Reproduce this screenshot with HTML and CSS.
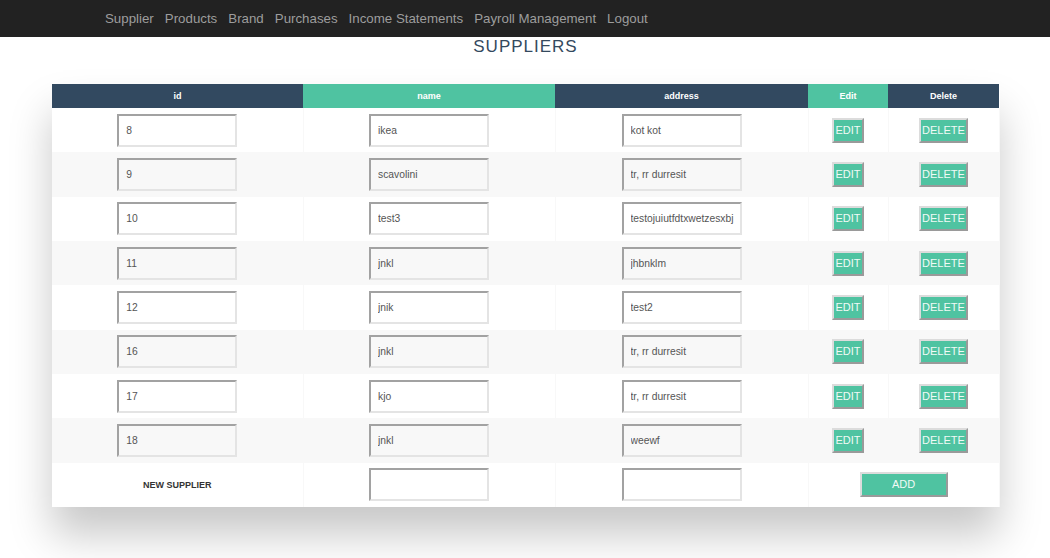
FILE: index.html
```html
<!DOCTYPE html>
<html>
<head>
<meta charset="utf-8">
<title>Suppliers</title>
<link rel="stylesheet" href="styles.css">
</head>
<body>
<nav class="navbar">
  <a href="#">Supplier</a>
  <a href="#">Products</a>
  <a href="#">Brand</a>
  <a href="#">Purchases</a>
  <a href="#">Income Statements</a>
  <a href="#">Payroll Management</a>
  <a href="#">Logout</a>
</nav>
<h2 class="title">Suppliers</h2>
<div class="table-wrapper">
<table class="fl-table">
  <colgroup>
    <col class="c-id"><col class="c-name"><col class="c-addr"><col class="c-edit"><col class="c-del">
  </colgroup>
  <thead>
    <tr><th>id</th><th>name</th><th>address</th><th>Edit</th><th>Delete</th></tr>
  </thead>
  <tbody>
    <tr><td><input class="field" value="8"></td><td><input class="field" value="ikea"></td><td><input class="field" value="kot kot"></td><td><button class="btn">EDIT</button></td><td><button class="btn">DELETE</button></td></tr>
    <tr><td><input class="field" value="9"></td><td><input class="field" value="scavolini"></td><td><input class="field" value="tr, rr durresit"></td><td><button class="btn">EDIT</button></td><td><button class="btn">DELETE</button></td></tr>
    <tr><td><input class="field" value="10"></td><td><input class="field" value="test3"></td><td><input class="field" value="testojuiutfdtxwetzesxbj"></td><td><button class="btn">EDIT</button></td><td><button class="btn">DELETE</button></td></tr>
    <tr><td><input class="field" value="11"></td><td><input class="field" value="jnkl"></td><td><input class="field" value="jhbnklm"></td><td><button class="btn">EDIT</button></td><td><button class="btn">DELETE</button></td></tr>
    <tr><td><input class="field" value="12"></td><td><input class="field" value="jnik"></td><td><input class="field" value="test2"></td><td><button class="btn">EDIT</button></td><td><button class="btn">DELETE</button></td></tr>
    <tr><td><input class="field" value="16"></td><td><input class="field" value="jnkl"></td><td><input class="field" value="tr, rr durresit"></td><td><button class="btn">EDIT</button></td><td><button class="btn">DELETE</button></td></tr>
    <tr><td><input class="field" value="17"></td><td><input class="field" value="kjo"></td><td><input class="field" value="tr, rr durresit"></td><td><button class="btn">EDIT</button></td><td><button class="btn">DELETE</button></td></tr>
    <tr><td><input class="field" value="18"></td><td><input class="field" value="jnkl"></td><td><input class="field" value="weewf"></td><td><button class="btn">EDIT</button></td><td><button class="btn">DELETE</button></td></tr>
    <tr><td class="new-label">NEW SUPPLIER</td><td><input class="field" value=""></td><td><input class="field" value=""></td><td colspan="2"><button class="btn btn-add">ADD</button></td></tr>
  </tbody>
</table>
</div>
</body>
</html>
```

FILE: styles.css
```css
html, body {
  margin: 0;
  padding: 0;
  background: #ffffff;
  font-family: "Liberation Sans", Arial, sans-serif;
}

body {
  min-height: 558px;
}

.navbar {
  height: 37px;
  background: #222222;
  display: flex;
  align-items: center;
  gap: 11px;
  padding-left: 105px;
  box-sizing: border-box;
}

.navbar a {
  color: #9d9d9d;
  font-size: 13.3px;
  text-decoration: none;
  line-height: 16px;
  padding-top: 1px;
}

.title {
  margin: 0 0 27px;
  text-align: center;
  font-size: 17px;
  font-weight: normal;
  line-height: 20px;
  letter-spacing: 1px;
  text-transform: uppercase;
  color: #34495e;
  padding-left: 1px;
}

.table-wrapper {
  width: 947px;
  margin: 0 0 60px 52px;
  box-shadow: 0 28px 40px rgba(0, 0, 0, 0.22);
}

.fl-table {
  width: 947px;
  table-layout: fixed;
  border-collapse: collapse;
  background: #ffffff;
  white-space: nowrap;
}

.c-id { width: 251px; }
.c-name { width: 252px; }
.c-addr { width: 253px; }
.c-edit { width: 80px; }
.c-del { width: 111px; }

.fl-table th {
  height: 24px;
  padding: 0;
  font-size: 9px;
  font-weight: bold;
  color: #ffffff;
  background: #4fc3a1;
  text-align: center;
}

.fl-table th:nth-child(odd) {
  background: #324960;
}

.fl-table td {
  height: 44.33px;
  padding: 0;
  text-align: center;
  border-right: 1px solid #f8f8f8;
  vertical-align: middle;
}

.fl-table tbody tr:nth-child(even) {
  background: #f8f8f8;
}

.field {
  display: block;
  margin: 0 auto;
  width: 120px;
  height: 33px;
  box-sizing: border-box;
  border-width: 2px;
  border-style: solid;
  border-color: #a2a2a2 #e4e4e4 #e4e4e4 #a2a2a2;
  background: transparent;
  padding: 0 6px 0 7px;
  font-family: "Liberation Sans", Arial, sans-serif;
  font-size: 10.3px;
  color: #555555;
  outline: none;
}

.btn {
  display: inline-block;
  background: #4fc3a1;
  color: #f2faf6;
  font-family: "Liberation Sans", Arial, sans-serif;
  font-size: 11px;
  line-height: 13px;
  padding: 4px 1.5px;
  border-width: 2px;
  border-style: solid;
  border-color: #dcdcdc #9a9a9a #9a9a9a #dcdcdc;
  cursor: pointer;
}

.btn-add {
  width: 88px;
  height: 25px;
  padding: 0;
}

.new-label {
  font-size: 9px;
  font-weight: bold;
  color: #333333;
}
```
